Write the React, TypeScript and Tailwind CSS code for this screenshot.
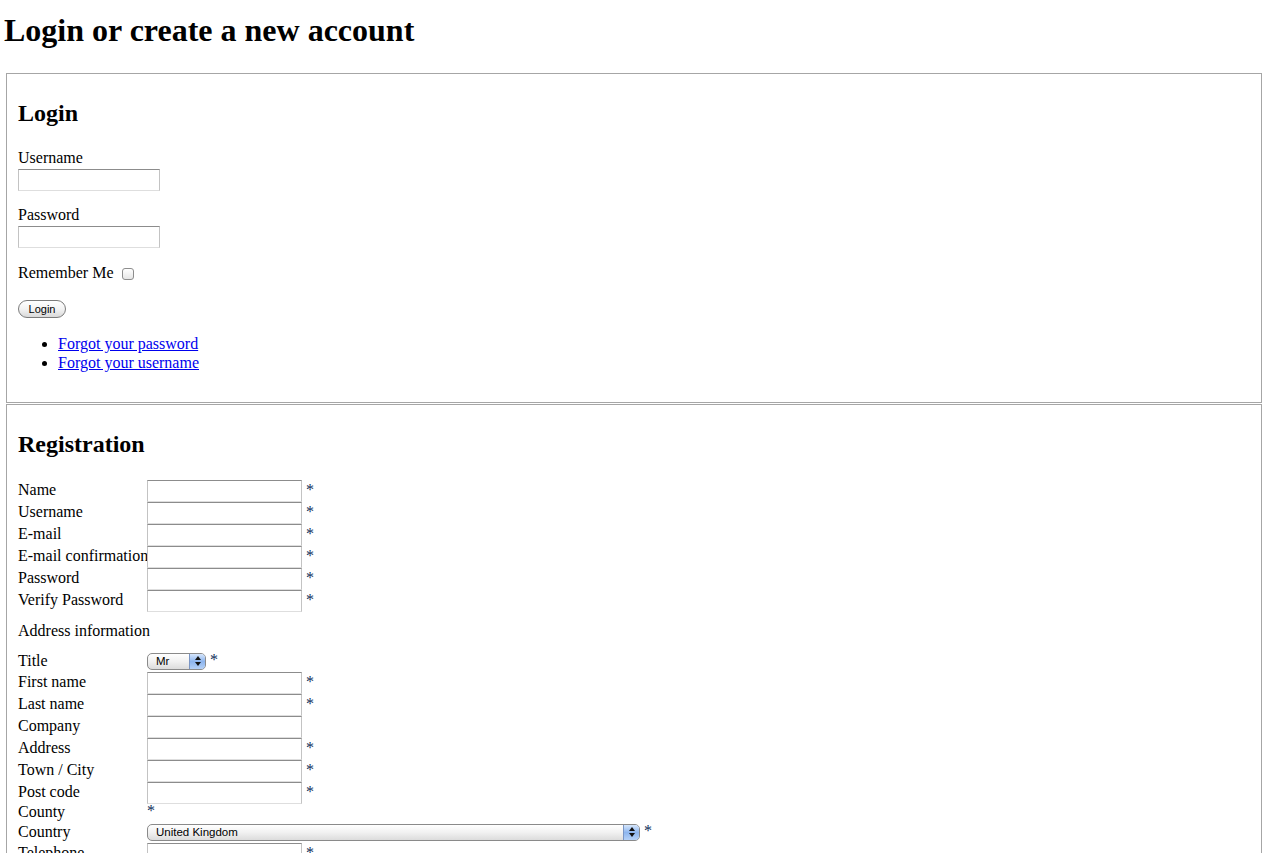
import React from "react";

const serif = "font-['Liberation_Serif','Times_New_Roman',serif]";
const sans = "font-['Liberation_Sans',Arial,sans-serif]";

const inputCls =
  "block h-[22px] border border-solid border-t-[#8c8c8c] border-x-[#c3c3c3] border-b-[#dedede] bg-white outline-none";

const Star = () => <span className="pl-[4px] pb-[2px] leading-[16px] text-[#0d2c5a]">*</span>;

const Select = ({ value, width }: { value: string; width: string }) => (
  <div
    className={`flex h-[17px] ${width} items-stretch overflow-hidden rounded-[5px] border border-[#8a8a8a] bg-gradient-to-b from-white via-[#f1f1f1] to-[#dcdcdc] ${sans}`}
  >
    <span className="flex-1 pl-[8px] text-[11.5px] leading-[15px] text-black">{value}</span>
    <span className="flex w-[16px] flex-col items-center justify-center gap-[2px] border-l border-[#7a95c4] bg-gradient-to-b from-[#d6e6fb] via-[#8db5ee] to-[#b5d1f7]">
      <svg width="6" height="4" viewBox="0 0 6 4">
        <path d="M3 0 L6 4 L0 4 Z" fill="#111" />
      </svg>
      <svg width="6" height="4" viewBox="0 0 6 4">
        <path d="M0 0 L6 0 L3 4 Z" fill="#111" />
      </svg>
    </span>
  </div>
);

const Row = ({
  label,
  children,
  pad = "pb-[2px]",
}: {
  label: string;
  children?: React.ReactNode;
  pad?: string;
}) => (
  <div className="flex h-[22px] items-center">
    <span className={`w-[129px] shrink-0 whitespace-nowrap leading-[16px] ${pad}`}>{label}</span>
    {children}
  </div>
);

const TextRow = ({ label, required = true }: { label: string; required?: boolean }) => (
  <Row label={label}>
    <input type="text" className={`${inputCls} w-[155px]`} />
    {required && <Star />}
  </Row>
);

export default function App() {
  return (
    <div className={`min-h-screen bg-white p-1 text-[16px] text-black ${serif}`}>
      <h1 className="mt-2 mb-[25px] text-[32px] font-bold leading-[36px]">
        Login or create a new account
      </h1>

      <fieldset className="mx-[2px] border border-[#a6a6a6] px-[11px] pb-[30px]">
        <h2 className="mt-[25px] text-[24px] font-bold leading-[28px]">Login</h2>
        <label className="mt-[22px] block leading-[18px]">Username</label>
        <input type="text" className={`${inputCls} mt-[2px] w-[142px]`} />
        <label className="mt-[15px] block leading-[18px]">Password</label>
        <input type="password" className={`${inputCls} mt-[2px] w-[142px]`} />
        <div className="mt-[16px] flex h-[18px] items-center">
          <span className="leading-[18px]">Remember Me</span>
          <span className="ml-[8px] mt-[2px] h-[12px] w-[12px] rounded-[3px] border border-[#8d8d8d] bg-gradient-to-b from-white to-[#e6e6e6]" />
        </div>
        <button
          className={`mt-[18px] block h-[18px] w-[48px] rounded-full border border-[#7b7b7b] bg-gradient-to-b from-white via-[#f3f3f3] to-[#d9d9d9] text-[11px] leading-[16px] text-black ${sans}`}
        >
          Login
        </button>
        <ul className="mt-[16px] list-disc pl-[40px] leading-[19px]">
          <li>
            <a href="#" className="text-[#0000ee] underline">
              Forgot your password
            </a>
          </li>
          <li>
            <a href="#" className="text-[#0000ee] underline">
              Forgot your username
            </a>
          </li>
        </ul>
      </fieldset>

      <fieldset className="mx-[2px] mt-[1px] border border-[#a6a6a6] px-[11px] pb-[30px]">
        <h2 className="mt-[25px] text-[24px] font-bold leading-[28px]">Registration</h2>
        <div className="mt-[22px]">
          <TextRow label="Name" />
          <TextRow label="Username" />
          <TextRow label="E-mail" />
          <TextRow label="E-mail confirmation" />
          <TextRow label="Password" />
          <TextRow label="Verify Password" />
          <div className="h-[38px] pt-[10px] leading-[18px]">Address information</div>
          <Row label="Title" pad="pb-0">
            <Select value="Mr" width="w-[59px]" />
            <Star />
          </Row>
          <TextRow label="First name" />
          <TextRow label="Last name" />
          <TextRow label="Company" required={false} />
          <TextRow label="Address" />
          <TextRow label="Town / City" />
          <TextRow label="Post code" />
          <div className="flex h-[17px] items-start">
            <span className="w-[129px] shrink-0 leading-[16px]">County</span>
            <span className="text-[#0d2c5a] leading-[14px]">*</span>
          </div>
          <Row label="Country" pad="pb-0">
            <Select value="United Kingdom" width="w-[493px]" />
            <Star />
          </Row>
          <TextRow label="Telephone" />
          <TextRow label="Mobile" required={false} />
        </div>
      </fieldset>
    </div>
  );
}
